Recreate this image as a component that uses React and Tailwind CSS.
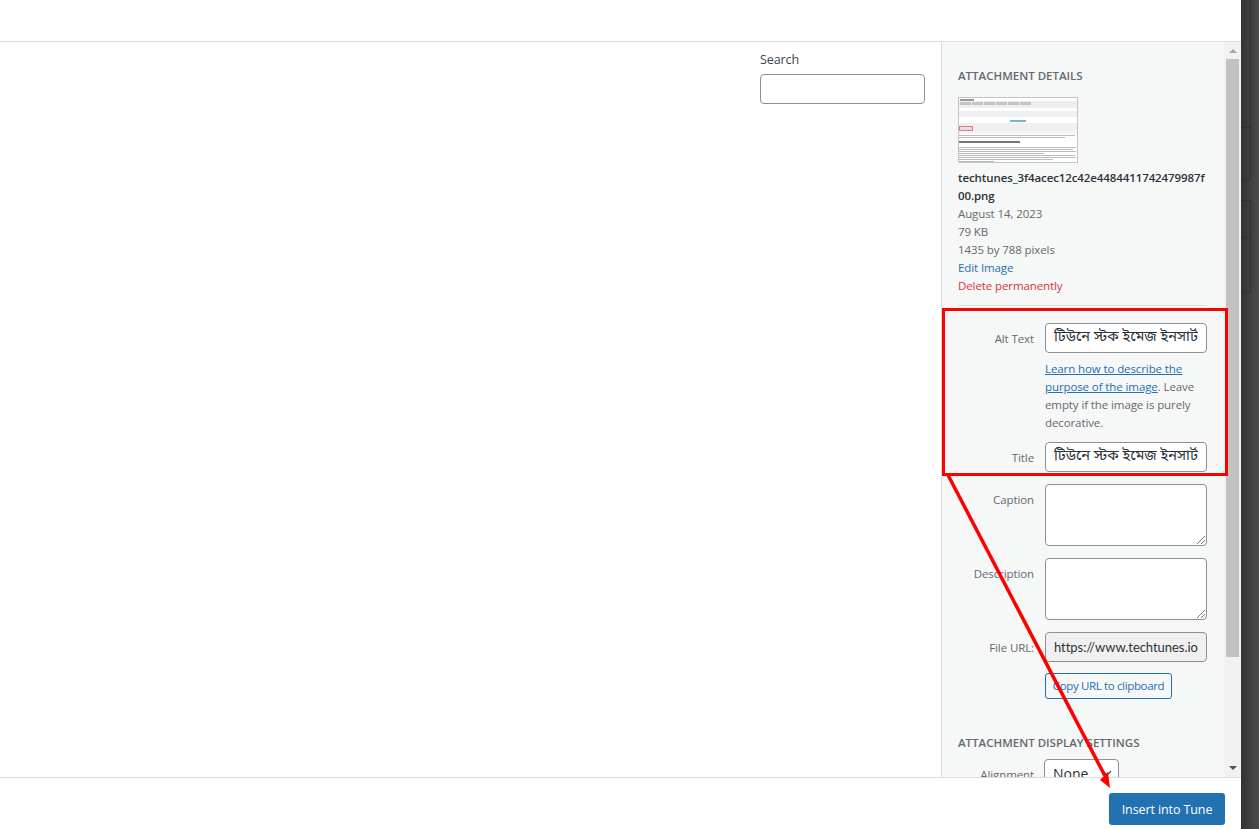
const Field = ({ label, className = "", children }) => (
  <div className={`flex ${className}`}>
    <span className="w-[76px] shrink-0 pt-[7px] text-right text-[#646970]">{label}</span>
    <div className="ml-[11px] w-[162px]">{children}</div>
  </div>
);

const inputClass =
  "h-[30px] w-full rounded-[4px] border border-[#8c8f94] px-2 text-[14px] leading-[28px] text-[#2c3338]";

const BengaliInput = ({ value }) => (
  <div className={`${inputClass} bg-white`}>
    <div className="overflow-hidden whitespace-nowrap font-['Noto_Sans_Bengali','Noto_Sans',sans-serif] text-[14.5px] tracking-normal">{value}</div>
  </div>
);

const Resizable = () => (
  <div className="relative h-[62px] w-full rounded-[4px] border border-[#8c8f94] bg-white">
    <svg className="absolute bottom-[1px] right-[1px]" width="9" height="9" viewBox="0 0 9 9">
      <path d="M1 9 L9 1 M5 9 L9 5" stroke="#777" strokeWidth="1" />
    </svg>
  </div>
);

const TextLines = ({ rows, color }) => (
  <div className="flex flex-col gap-[1px]">
    {rows.map((w, i) => (
      <div key={i} className={`h-[1px] ${color}`} style={{ width: `${w}%` }} />
    ))}
  </div>
);

const Thumb = () => (
  <div className="h-[66px] w-[120px] overflow-hidden border border-[#c3c4c7] bg-white">
    <div className="blur-[0.4px]">
      <div className="ml-[1px] mt-[1px] h-[2px] w-[14px] bg-[#999]" />
      <div className="flex h-[5px] items-center gap-[1px] bg-[#eee] px-[1px]">
        {[0, 1, 2, 3, 4, 5].map((i) => (
          <div key={i} className="h-[3px] w-[11px] bg-[#c4c4c4]" />
        ))}
      </div>
      <div className="h-[2px] bg-[#f0f0f0]" />
      <div className="h-[3px] bg-white" />
      <div className="h-[6px] bg-[#f0f0f0]" />
      <div className="h-[3px] bg-white" />
      <div className="flex h-[3px] justify-center bg-white">
        <div className="h-[2px] w-[16px] bg-[#7ab0d8]" />
      </div>
      <div className="h-[3px] bg-[#f0f0f0]" />
      <div className="bg-[#f0f0f0]">
        <div className="h-[5px] w-[14px] border border-[#e77] bg-[#dde]" />
      </div>
      <div className="h-[3px] bg-[#f4f4f4]" />
      <div className="pt-[1px]">
        <TextLines rows={[98, 90]} color="bg-[#bbb]" />
      </div>
      <div className="mt-[3px] h-[2px] w-[52%] bg-[#777]" />
      <div className="pt-[4px]">
        <TextLines rows={[99, 97, 99, 72]} color="bg-[#bbb]" />
      </div>
      <div className="pt-[1px]">
        <TextLines rows={[98, 99, 80, 30]} color="bg-[#bbb]" />
      </div>
    </div>
  </div>
);

export default function App() {
  return (
    <div className="relative flex h-[829px] w-[1259px] overflow-hidden font-['Open_Sans','Noto_Sans',sans-serif] text-[11.5px] leading-[18px] tracking-[-0.1px] text-[#646970]">
      <div className="flex h-full w-[1241px] shrink-0 flex-col bg-white">
        <div className="h-[42px] shrink-0 border-b border-[#dcdcde]" />

        <div className="flex min-h-0 flex-1">
          <div className="flex-1 pl-[760px] pt-[9px]">
            <div className="text-[12.5px] leading-[18px] text-[#3c434a]">Search</div>
            <div className="mt-[5px] h-[30px] w-[165px] rounded-[4px] border border-[#8c8f94] bg-white" />
          </div>

          <div className="flex w-[300px] shrink-0 border-l border-[#dcdcde] bg-[#f6f7f7]">
            <div className="w-[282px] overflow-hidden pl-4 pr-[17px]">
              <h2 className="mt-[25px] font-semibold uppercase leading-[18px] tracking-normal">Attachment Details</h2>
              <div className="mt-[12px]"><Thumb /></div>
              <div className="mt-[6px] break-all font-semibold text-[#2c3338]">techtunes_3f4acec12c42e4484411742479987f00.png</div>
              <div>August 14, 2023</div>
              <div>79 KB</div>
              <div>1435 by 788 pixels</div>
              <div className="text-[#2271b1]">Edit Image</div>
              <div className="text-[#d63638]">Delete permanently</div>
              <div className="mt-[10px] border-t border-[#dcdcde]" />

              <Field label="Alt Text" className="mt-[17px]">
                <BengaliInput value="টিউনে স্টক ইমেজ ইনসার্ট" />
              </Field>
              <div className="ml-[87px] mt-[7px] w-[162px]">
                <a className="text-[#2271b1] underline">Learn how to describe the purpose of the image</a>. Leave empty if the image is purely decorative.
              </div>
              <Field label="Title" className="mt-[10px]">
                <BengaliInput value="টিউনে স্টক ইমেজ ইনসার্ট" />
              </Field>
              <Field label="Caption" className="mt-[12px]"><Resizable /></Field>
              <Field label="Description" className="mt-[12px]"><Resizable /></Field>
              <Field label="File URL:" className="mt-[12px]">
                <div className={`${inputClass} bg-[#f0f0f1]`}>
                  <div className="overflow-hidden whitespace-nowrap font-['Lato',sans-serif] text-[13px] tracking-[-0.05px]">https://www.techtunes.io/wp-content</div>
                </div>
              </Field>
              <div className="ml-[87px] mt-[11px] flex h-[26px] w-[127px] items-center justify-center rounded-[3px] border border-[#2271b1] bg-[#f6f7f7] tracking-[-0.35px] text-[#2271b1]">Copy URL to clipboard</div>
              <h2 className="mt-[35px] whitespace-nowrap font-semibold uppercase leading-[18px] tracking-normal">Attachment Display Settings</h2>
              <div className="mt-[7px] flex">
                <span className="w-[76px] shrink-0 pt-[7px] text-right">Alignment</span>
                <div className="relative ml-[10px] h-[30px] w-[75px] rounded-[4px] border border-[#8c8f94] bg-white px-2 text-[14px] leading-[28px] tracking-normal text-[#2c3338]">
                  None
                  <svg className="absolute right-[6px] top-[10px]" width="10" height="6" viewBox="0 0 10 6">
                    <path d="M1 1 L5 5 L9 1" fill="none" stroke="#50575e" strokeWidth="1.5" />
                  </svg>
                </div>
              </div>
            </div>

            <div className="flex w-[17px] shrink-0 flex-col items-center bg-[#f1f1f1] pb-[7px] pt-[7px]">
              <div className="h-0 w-0 border-x-[4px] border-b-[4px] border-x-transparent border-b-[#a3a3a3]" />
              <div className="mt-[6px] h-[598px] w-[13px] bg-[#c1c1c1]" />
              <div className="mt-auto h-0 w-0 border-x-[4px] border-t-[4px] border-x-transparent border-t-[#505050]" />
            </div>
          </div>
        </div>

        <div className="flex h-[52px] shrink-0 justify-end border-t border-[#dcdcde] bg-white pr-4 pt-[15px]">
          <div className="flex h-[32px] w-[116px] items-center justify-center rounded-[3px] bg-[#2271b1] pt-[1px] text-[12.5px] text-white">Insert into Tune</div>
        </div>
      </div>

      {/* dimmed page behind the modal */}
      <div className="h-full w-[18px] shrink-0 bg-linear-to-r from-[#333333] to-[#4c4c4c]">
        <div className="h-[127px] w-[10px] border-r border-[#303030]" />
        <div className="h-[53px] w-[10px] border-y border-r border-[#303030]" />
        <div className="mt-[20px] h-[38px] w-[10px] border-y border-r border-[#303030]" />
        <div className="h-[55px] w-[10px] border-b border-r border-[#303030]" />
      </div>

      {/* annotation drawn over the screenshot */}
      <div className="absolute left-[942px] top-[308px] h-[168px] w-[286px] border-[3px] border-[#ff0000]" />
      <svg className="absolute left-0 top-0" width="1259" height="829">
        <line x1="948" y1="475" x2="1105" y2="776" stroke="#ff0000" strokeWidth="3.5" />
        <polygon points="1110,788 1100,780 1108,772" fill="#ff0000" />
      </svg>
    </div>
  );
}
